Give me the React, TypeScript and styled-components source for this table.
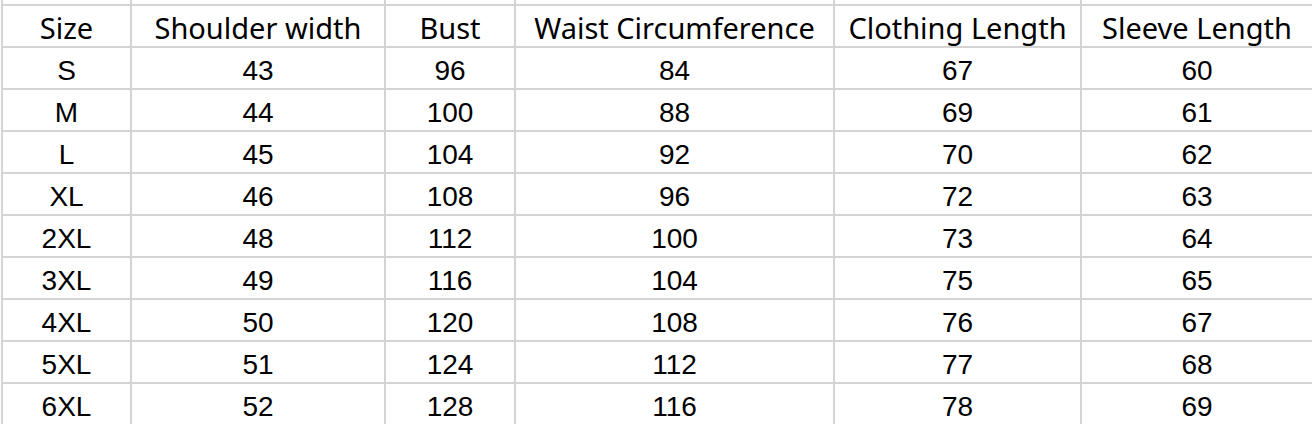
import styled, { createGlobalStyle } from 'styled-components';

const GlobalStyle = createGlobalStyle`
  html, body {
    margin: 0;
    padding: 0;
    background: #ffffff;
  }
  body {
    width: 1312px;
    height: 424px;
    overflow: hidden;
  }
`;

const columns = [
  'Size',
  'Shoulder width',
  'Bust',
  'Waist Circumference',
  'Clothing Length',
  'Sleeve Length',
];

const sizeRows: (string | number)[][] = [
  ['S', 43, 96, 84, 67, 60],
  ['M', 44, 100, 88, 69, 61],
  ['L', 45, 104, 92, 70, 62],
  ['XL', 46, 108, 96, 72, 63],
  ['2XL', 48, 112, 100, 73, 64],
  ['3XL', 49, 116, 104, 75, 65],
  ['4XL', 50, 120, 108, 76, 67],
  ['5XL', 51, 124, 112, 77, 68],
  ['6XL', 52, 128, 116, 78, 69],
];

// spreadsheet-like grid, lines drawn by cell borders
const Sheet = styled.div`
  display: grid;
  grid-template-columns: 129px 254px 130px 319px 247px 232px;
  grid-template-rows: 6px;
  grid-auto-rows: 42px;
  margin-left: 1px;
  border-left: 2px solid #d4d4d4;
  color: #000000;
`;

const Cell = styled.div<{ $header?: boolean; $clipped?: boolean }>`
  box-sizing: border-box;
  display: flex;
  align-items: ${(p) => (p.$header ? 'center' : 'flex-end')};
  justify-content: center;
  height: ${(p) => (p.$clipped ? '6px' : '42px')};
  padding-top: ${(p) => (p.$header ? '3px' : '0')};
  padding-bottom: ${(p) => (p.$header || p.$clipped ? '0' : '3px')};
  border-right: 2px solid #d4d4d4;
  border-bottom: 2px solid #d4d4d4;
  font-family: ${(p) =>
    p.$header
      ? '"Noto Sans", "Noto Sans CJK SC", sans-serif'
      : '"Liberation Sans", Arial, sans-serif'};
  font-size: ${(p) => (p.$header ? '29px' : '28px')};
  line-height: 1;
  white-space: nowrap;
  overflow: hidden;
`;

function App() {
  return (
    <>
      <GlobalStyle />
      <Sheet>
        {/* tail of the row above, cut off by the crop */}
        {columns.map((c) => (
          <Cell key={`top-${c}`} $clipped />
        ))}
        {columns.map((c) => (
          <Cell key={c} $header>
            {c}
          </Cell>
        ))}
        {sizeRows.map((row) =>
          row.map((value, i) => (
            <Cell key={`${row[0]}-${i}`}>{value}</Cell>
          )),
        )}
      </Sheet>
    </>
  );
}

export default App;
